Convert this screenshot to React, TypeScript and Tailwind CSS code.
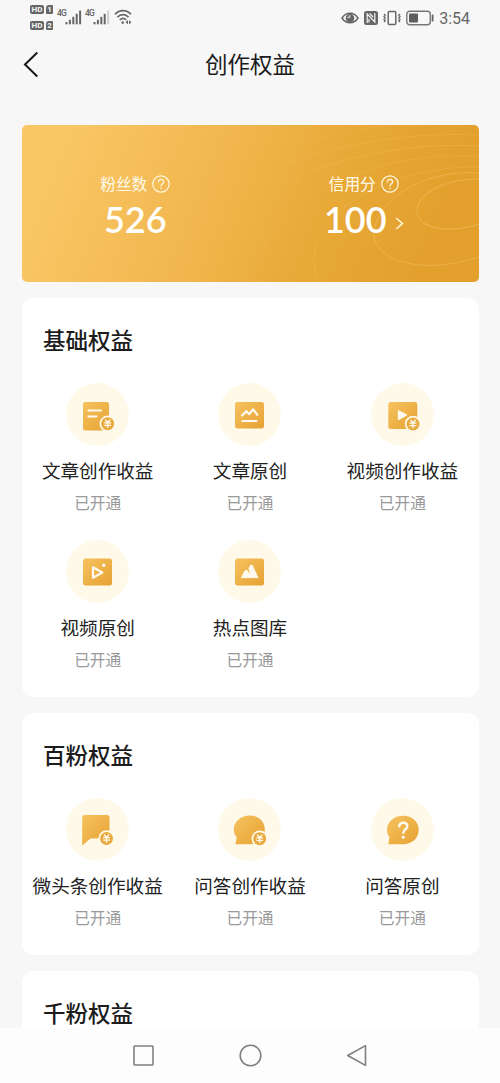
import React from 'react';

interface Benefit {
  name: string;
  icon: React.ReactNode;
}

interface BenefitSectionProps {
  title: string;
  items: Benefit[];
  className?: string;
}

const GOLD = 'url(#gold)';
const CREAM = '#fff9e9';

// Small yen coin in the corner of the "income" icons
const Coin = ({ x, y }: { x: number; y: number }) => (
  <g transform={`translate(${x} ${y})`}>
    <circle r="8.2" fill={CREAM} />
    <circle r="6.5" fill="#e9ab3f" />
    <path
      d="M-2.6 -4 L0 -1.2 L2.6 -4 M0 -1.2 V4.2 M-3.4 -0.9 H3.4 M-3.4 1.6 H3.4"
      stroke="#fffaf0"
      strokeWidth="1.3"
      fill="none"
    />
  </g>
);

const IconCircle = ({ children }: { children: React.ReactNode }) => (
  <svg className="size-[63px] shrink-0" viewBox="0 0 63 63">
    <defs>
      <linearGradient id="gold" x1="0" y1="0" x2="1" y2="1">
        <stop offset="0" stopColor="#f6c25f" />
        <stop offset="1" stopColor="#e6a233" />
      </linearGradient>
    </defs>
    <circle cx="31.5" cy="31.5" r="31.5" fill={CREAM} />
    {children}
  </svg>
);

const ArticleIncomeIcon = (
  <IconCircle>
    <rect x="17" y="19" width="26" height="28.5" rx="2.5" fill={GOLD} />
    <path d="M22.5 27.5H35M22.5 33.5H30.5" stroke="#fffaf0" strokeWidth="2.2" strokeLinecap="round" />
    <Coin x={41.7} y={40.7} />
  </IconCircle>
);

const ArticleOriginalIcon = (
  <IconCircle>
    <rect x="17" y="19" width="29" height="26.5" rx="2.5" fill={GOLD} />
    <path
      d="M24 32.5L28.3 28.2L31.3 31.2L35 26.3L39.3 31.7"
      stroke="#fffaf0"
      strokeWidth="2.2"
      fill="none"
      strokeLinecap="round"
      strokeLinejoin="round"
    />
    <path d="M24.5 38H38.5" stroke="#fffaf0" strokeWidth="2.2" strokeLinecap="round" />
  </IconCircle>
);

const VideoIncomeIcon = (
  <IconCircle>
    <rect x="17.3" y="19" width="29" height="27" rx="2.5" fill={GOLD} />
    <path d="M27.3 27.5L36 32L27.3 36.7Z" fill="#fffaf0" stroke="#fffaf0" strokeLinejoin="round" />
    <Coin x={42} y={41} />
  </IconCircle>
);

const VideoOriginalIcon = (
  <IconCircle>
    <rect x="17" y="18.5" width="29" height="27" rx="2.5" fill={GOLD} />
    <path
      d="M27 27.3V37.7L36.3 32.5Z"
      fill="none"
      stroke="#fffaf0"
      strokeWidth="2.2"
      strokeLinejoin="round"
    />
    <circle cx="37.7" cy="25.3" r="1.7" fill="#fffaf0" />
  </IconCircle>
);

const GalleryIcon = (
  <IconCircle>
    <rect x="17" y="18.5" width="29" height="27" rx="2.5" fill={GOLD} />
    <path
      d="M23.3 37.7L26.8 31L28.8 30L31 33.5L32.2 33L30.8 28.5L32.5 25.2H34.3L40 37.7Z"
      fill="#fffaf0"
      stroke="#fffaf0"
      strokeWidth="0.8"
      strokeLinejoin="round"
    />
  </IconCircle>
);

const MicroIncomeIcon = (
  <IconCircle>
    <path d="M16.2 19.5Q16.2 17 18.7 17H41Q43.5 17 43.5 19.5V40.5H24.5L16.2 47.5Z" fill={GOLD} />
    <Coin x={40.5} y={40.5} />
  </IconCircle>
);

const AnswerIncomeIcon = (
  <IconCircle>
    <path
      d="M32 17.5C40.5 17.5 46.8 23.5 46.8 31.5C46.8 40.5 40.5 46.3 31.5 46.3H17.3L18.8 39.5C16.7 37 15.8 34.5 15.8 31.5C15.8 23.5 23 17.5 32 17.5Z"
      fill={GOLD}
    />
    <Coin x={41.7} y={40.7} />
  </IconCircle>
);

const AnswerOriginalIcon = (
  <IconCircle>
    <path
      d="M32.3 17.8C41 17.8 47.7 23.8 47.7 31.8C47.7 40.3 41 46.2 32.3 46.2H17.3L18.5 38.8C16.8 36.7 16 34.5 16 31.8C16 23.8 23.3 17.8 32.3 17.8Z"
      fill={GOLD}
    />
    <path
      d="M28.2 28.4C28.4 26 30 24.8 32.2 24.8C34.6 24.8 36.3 26.2 36.3 28.3C36.3 31.2 32.5 31.3 32.3 34.8"
      stroke="#fffaf0"
      strokeWidth="2.4"
      fill="none"
      strokeLinecap="round"
    />
    <circle cx="32.2" cy="39.2" r="1.6" fill="#fffaf0" />
  </IconCircle>
);

const basicBenefits: Benefit[] = [
  { name: '文章创作收益', icon: ArticleIncomeIcon },
  { name: '文章原创', icon: ArticleOriginalIcon },
  { name: '视频创作收益', icon: VideoIncomeIcon },
  { name: '视频原创', icon: VideoOriginalIcon },
  { name: '热点图库', icon: GalleryIcon },
];

const hundredFansBenefits: Benefit[] = [
  { name: '微头条创作收益', icon: MicroIncomeIcon },
  { name: '问答创作收益', icon: AnswerIncomeIcon },
  { name: '问答原创', icon: AnswerOriginalIcon },
];

const HdBadge = ({ sim }: { sim: string }) => (
  <div className="flex gap-[2px] text-[8px] leading-[9px] font-bold text-[#f7f7f7]">
    <span className="flex h-[9px] w-[14px] items-center justify-center rounded-[2px] bg-[#666]">HD</span>
    <span className="flex h-[9px] w-[7px] items-center justify-center rounded-[1px] rounded-tl-[3px] bg-[#666]">
      {sim}
    </span>
  </div>
);

const Signal = ({ weak }: { weak?: boolean }) => (
  <div className="flex">
    <span className="-mr-px h-4 w-[9px] text-[8.5px] leading-[9px] font-medium tracking-[-0.8px]">4G</span>
    <svg className="mt-[1px] h-[15px] w-[17px]" viewBox="0 0 17 15" fill="#666">
      <rect x="0.5" y="12" width="2" height="2.3" />
      <rect x="3.9" y="9.8" width="2" height="4.5" />
      <rect x="7.3" y="6.8" width="2" height="7.5" />
      <rect x="10.7" y="3.8" width="2" height="10.5" />
      <rect x="14.1" y="0.6" width="2" height="13.7" fill={weak ? '#d0d0d0' : '#666'} />
    </svg>
  </div>
);

const StatusBar = () => (
  <div className="flex h-[34px] shrink-0 items-start justify-between pr-[30px] pl-[30px] font-[Roboto,sans-serif] text-[#666]">
    <div className="flex">
      <div className="mt-[5px] flex flex-col gap-[7px]">
        <HdBadge sim="1" />
        <HdBadge sim="2" />
      </div>
      <div className="mt-[9px] ml-1 flex gap-[3px]">
        <Signal />
        <Signal weak />
      </div>
      <svg className="mt-[9px] ml-1 h-4 w-[18px]" viewBox="0 0 18 16" fill="none" stroke="#666" strokeWidth="1.7">
        <path d="M1 5.3C5.5 0.4 12.5 0.4 17 5.3" />
        <path d="M3.4 8.2C6.6 4.7 11.4 4.7 14.6 8.2" />
        <path d="M5.8 11C7.8 8.9 10.2 8.9 12.2 11" />
        <circle cx="8.7" cy="13.6" r="1.3" fill="#666" stroke="none" />
        <path d="M14 11L11.7 13.3L14 15.4ZM15 11L17.3 13.3L15 15.4Z" fill="#666" stroke="none" />
      </svg>
    </div>

    <div className="mt-2 flex h-[19px] items-center">
      <svg className="h-[14px] w-[18px]" viewBox="0 0 18 14">
        <path d="M1 7C5 0.6 13 0.6 17 7C13 13.2 5 13.2 1 7Z" fill="none" stroke="#666" strokeWidth="1.5" />
        <circle cx="9" cy="7" r="4.3" fill="#666" />
        <path d="M8.8 4V6.4H6.2" stroke="#f7f7f7" strokeWidth="0.9" fill="none" />
      </svg>
      <svg className="ml-[5px] h-[14px] w-[14px]" viewBox="0 0 14 14">
        <rect width="14" height="14" rx="2.5" fill="#666" />
        <path d="M3.2 12V3L10.8 11V2M5.6 2.5L9 6M5 11.5V8" stroke="#f7f7f7" strokeWidth="1.2" fill="none" />
      </svg>
      <svg className="ml-[5px] h-4 w-[18px]" viewBox="0 0 18 16" fill="none" stroke="#666">
        <rect x="5.2" y="1.6" width="7.6" height="12.8" rx="1.2" strokeWidth="1.5" />
        <path d="M1 4L2.2 5.3L1 6.6L2.2 8L1 9.4L2.2 10.7L1 12M17 4L15.8 5.3L17 6.6L15.8 8L17 9.4L15.8 10.7L17 12" strokeWidth="1.3" />
      </svg>
      <svg className="ml-[5px] h-4 w-[28px]" viewBox="0 0 28 16">
        <rect x="0.8" y="1.2" width="23.5" height="13.6" rx="3" fill="none" stroke="#777" strokeWidth="1.4" />
        <rect x="3" y="3.5" width="9" height="9" rx="1" fill="#5f5f5f" />
        <rect x="25.7" y="4.5" width="1.8" height="7" rx="0.6" fill="#666" />
      </svg>
      <span className="mt-[3px] ml-[5px] text-[16px] leading-none">3:54</span>
    </div>
  </div>
);

const HelpIcon = () => (
  <svg className="size-[18px]" viewBox="0 0 18 18" fill="none" stroke="#fff8df" strokeLinecap="round">
    <circle cx="9" cy="9" r="8.2" strokeWidth="1.2" />
    <path
      d="M6.3 6.9C6.3 5.3 7.5 4.3 9 4.3C10.6 4.3 11.7 5.3 11.7 6.8C11.7 8.8 9 8.9 9 11.1"
      strokeWidth="1.2"
    />
    <circle cx="9" cy="13.5" r="0.5" fill="#fff8df" strokeWidth="0.6" />
  </svg>
);

const StatsCard = () => (
  <div className="relative mx-[21.5px] mt-[31px] h-[157px] shrink-0 overflow-hidden rounded-[5px] bg-[linear-gradient(112deg,#fac765_8%,#f2b851_38%,#e8a937_65%,#e3a02d_88%)]">
    {/* Contour rings on the right side */}
    <svg
      className="absolute inset-0 h-full w-full"
      viewBox="0 0 457 157"
      fill="none"
      stroke="#f6c86e"
      strokeOpacity="0.42"
    >
      <path d="M457 54C424 54 396 68 395 85C395 104 427 109 457 99" strokeWidth="1.2" />
      <path d="M457 48C400 44 350 77 352 112C357 139 407 149 457 132" />
      <path d="M457 42C375 40 291 83 292 136C292 145 294 151 297 157" strokeOpacity="0.25" />
      <path d="M457 31C365 25 262 67 240 126" strokeOpacity="0.22" />
      <path d="M457 21C390 17 321 30 265 57" strokeOpacity="0.3" />
      <path d="M457 10C388 7 325 18 260 39" strokeOpacity="0.25" />
      <path d="M367 1C325 5 295 13 265 24" strokeOpacity="0.2" />
    </svg>
    <div className="relative grid grid-cols-2 pt-[48px] text-[#fffbed]">
      <div className="flex flex-col items-center pr-px">
        <div className="flex h-[22px] items-center gap-[5px] text-[15.7px] leading-[22px]">
          粉丝数
          <HelpIcon />
        </div>
        <div className="font-[Lato,sans-serif] text-[36px] leading-[48px] font-semibold text-white">526</div>
      </div>
      <div className="flex flex-col items-center pr-px">
        <div className="flex h-[22px] items-center gap-[5px] text-[15.7px] leading-[22px]">
          信用分
          <HelpIcon />
        </div>
        <div className="flex items-center">
          <span className="font-[Lato,sans-serif] text-[36px] leading-[48px] font-semibold text-white">100</span>
          <svg className="mt-[9px] ml-2 h-[13px] w-[9px]" viewBox="0 0 9 13" fill="none" stroke="#fff8df" strokeWidth="1.6">
            <path d="M1.2 1L7.4 6.5L1.2 12" />
          </svg>
        </div>
      </div>
    </div>
  </div>
);

const BenefitSection: React.FC<BenefitSectionProps> = ({ title, items, className = '' }) => (
  <section className={`mx-[21.5px] mt-4 shrink-0 rounded-[12px] bg-white ${className}`}>
    <h2 className="pt-6 pl-[21.5px] text-[22.5px] leading-[34px] font-medium text-[#1c1c1c]">{title}</h2>
    <div className="mt-[27px] grid grid-cols-3 gap-y-[26px]">
      {items.map((item) => (
        <div key={item.name} className="flex h-[131px] flex-col items-center">
          {item.icon}
          <div className="mt-[10px] text-[18.6px] leading-[28px] whitespace-nowrap text-[#222]">{item.name}</div>
          <div className="mt-[8px] text-[15.7px] leading-[22px] text-[#999]">已开通</div>
        </div>
      ))}
    </div>
  </section>
);

const NavigationBar = () => (
  <div className="flex h-[55px] shrink-0 items-center justify-center gap-[84px] bg-[#fdfdfd]">
    <svg className="size-[23px]" viewBox="0 0 23 23" fill="none" stroke="#808080" strokeWidth="1.6">
      <rect x="2" y="2" width="19" height="19" rx="0.8" />
    </svg>
    <svg className="size-[23px]" viewBox="0 0 23 23" fill="none" stroke="#808080" strokeWidth="1.6">
      <circle cx="11.5" cy="11.5" r="10.3" />
    </svg>
    <svg className="size-[23px]" viewBox="0 0 23 23" fill="none" stroke="#808080" strokeWidth="1.6" strokeLinejoin="round">
      <path d="M19.5 1.6V21.4L1.7 11.5Z" />
    </svg>
  </div>
);

export default function App() {
  return (
    <div className="flex h-[1083px] w-[500px] flex-col overflow-hidden bg-[#f7f7f7] font-['Noto_Sans_CJK_SC',sans-serif]">
      <StatusBar />

      {/* Page header */}
      <header className="grid h-[60px] shrink-0 grid-cols-[60px_1fr_60px] items-center">
        <svg className="ml-[23px] h-[27px] w-[16px]" viewBox="0 0 16 27" fill="none" stroke="#1a1a1a" strokeWidth="2">
          <path d="M14.3 1.5L2 13.5L14.3 25.5" />
        </svg>
        <h1 className="pb-[2px] text-center text-[22.5px] leading-[34px] text-[#1c1c1c]">创作权益</h1>
      </header>

      <main className="flex min-h-0 flex-1 flex-col overflow-hidden">
        <StatsCard />
        <BenefitSection title="基础权益" items={basicBenefits} className="h-[399px]" />
        <BenefitSection title="百粉权益" items={hundredFansBenefits} className="h-[242px]" />
        <BenefitSection title="千粉权益" items={[]} className="h-[242px]" />
      </main>

      <NavigationBar />
    </div>
  );
}
